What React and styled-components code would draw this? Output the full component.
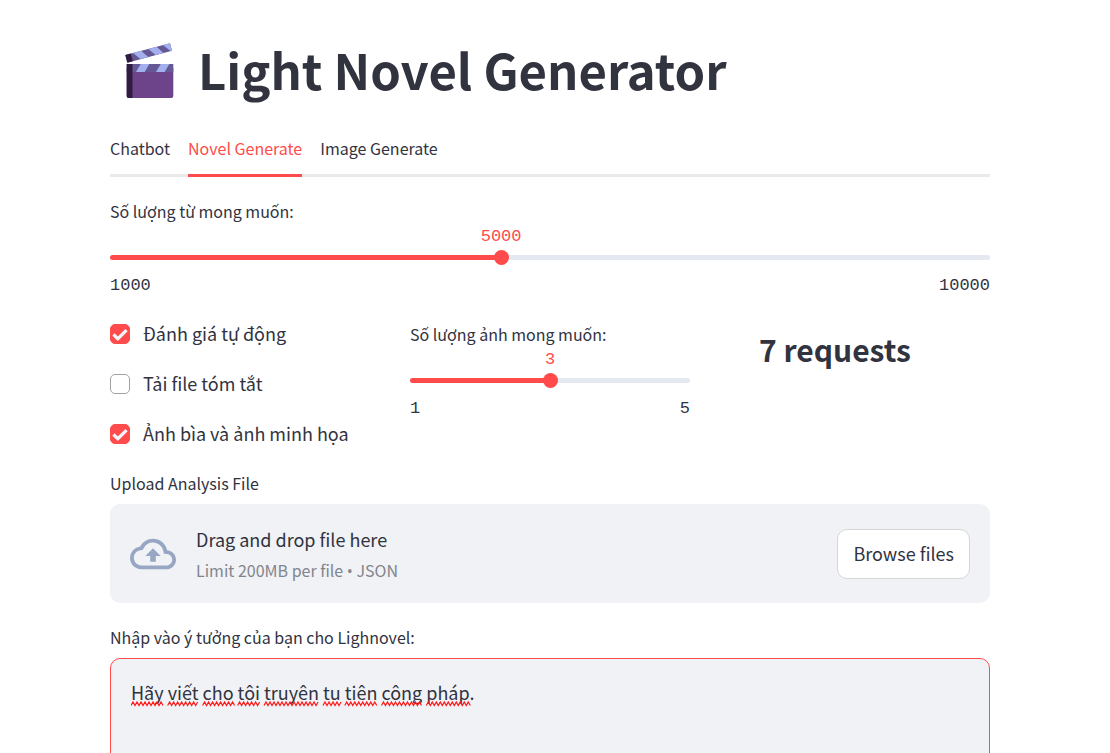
import React, { useLayoutEffect, useRef, useState } from "react";
import styled, { createGlobalStyle } from "styled-components";
import { MdOutlineCloudUpload } from "react-icons/md";

const ink = "#31333f";
const red = "#ff4b4b";
const panel = "#f0f2f6";
const sans = '"Noto Sans CJK SC", "Noto Sans", sans-serif';
const mono = '"Liberation Mono", monospace';

const GlobalStyle = createGlobalStyle`
  *, *::before, *::after { box-sizing: border-box; }
  html { scrollbar-width: none; }
  body {
    margin: 0;
    background: #fff;
    color: ${ink};
    font-family: ${sans};
    font-size: 18px;
    line-height: 30px;
  }
  button, input, textarea { font: inherit; color: inherit; }
`;

const Page = styled.main`
  display: flex;
  flex-direction: column;
  padding: 35px 120px 60px 110px;
`;

const Title = styled.h1`
  display: flex;
  align-items: center;
  gap: 20px;
  margin: 0 0 33px;
  padding-left: 12px;
  font-size: 49px;
  font-weight: 700;
  line-height: 68px;
`;

const Clapper = styled.svg`
  flex: none;
  width: 56px;
  height: 60px;
  margin-top: 2px;
`;

const TabList = styled.div`
  display: flex;
  gap: 18px;
  margin-bottom: 22px;
  border-bottom: 3px solid #eaeaeb;
`;

const Tab = styled.button`
  margin: 0 0 -3px;
  padding: 0 0 13px;
  border: 0;
  border-bottom: 3px solid ${(p) => (p.$active ? red : "transparent")};
  background: none;
  color: ${(p) => (p.$active ? red : ink)};
  font-size: 16px;
  line-height: 25px;
  cursor: pointer;
`;

const FieldLabel = styled.label`
  display: block;
  font-size: 16px;
  line-height: 25px;
`;

const SliderField = styled.div`
  display: flex;
  flex-direction: column;
`;

const ValueRow = styled.div`
  display: grid;
  height: 26px;
`;

const SliderValue = styled.output`
  grid-column: 2;
  justify-self: center;
  color: ${red};
  font-family: ${mono};
  font-size: 17px;
  line-height: 26px;
`;

const TrackRow = styled.div`
  display: grid;
  align-items: center;
  height: 15px;
`;

const TrackBar = styled.div`
  grid-area: 1 / 1;
  height: 5px;
  border-radius: 5px;
`;

const Range = styled.input`
  grid-area: 1 / 1;
  width: calc(100% + 15px);
  height: 15px;
  margin: 0 -7px;
  appearance: none;
  background: transparent;
  cursor: pointer;

  &::-webkit-slider-thumb {
    appearance: none;
    width: 15px;
    height: 15px;
    border-radius: 50%;
    background: ${red};
  }
`;

const Ticks = styled.div`
  display: flex;
  justify-content: space-between;
  margin-top: 8px;
  font-family: ${mono};
  font-size: 17px;
  line-height: 25px;
`;

const Columns = styled.div`
  display: grid;
  grid-template-columns: repeat(3, minmax(0, 1fr));
  gap: 20px;
  margin: 20px 0 23px;
`;

const CheckList = styled.div`
  display: flex;
  flex-direction: column;
  gap: 20px;
`;

const CheckLabel = styled.label`
  display: flex;
  align-items: center;
  gap: 13px;
  cursor: pointer;
`;

const CheckFrame = styled.span`
  display: grid;
  flex: none;
  width: 20px;
  height: 20px;
  margin-top: 2px;

  & > svg {
    grid-area: 1 / 1;
    place-self: center;
    width: 16px;
    height: 13px;
    pointer-events: none;
  }
`;

const CheckInput = styled.input`
  grid-area: 1 / 1;
  width: 20px;
  height: 20px;
  margin: 0;
  appearance: none;
  border: 1px solid #a3a4aa;
  border-radius: 5px;
  background: #fff;

  &:checked {
    border-color: ${red};
    background: ${red};
  }
`;

const SliderCell = styled.div`
  padding-top: 4px;
`;

const Requests = styled.h3`
  margin: 0;
  padding: 10px 30px 0 0;
  font-size: 30px;
  font-weight: 700;
  line-height: 42px;
  text-align: center;
`;

const DropZone = styled.section`
  display: flex;
  align-items: center;
  gap: 20px;
  margin: 8px 0 22px;
  padding: 20px;
  border-radius: 10px;
  background: ${panel};

  & > svg {
    flex: none;
    color: #97a6c3;
  }
`;

const DropText = styled.div`
  display: flex;
  flex: 1;
  flex-direction: column;
  gap: 4px;
`;

const DropHint = styled.small`
  color: #83858c;
  font-size: 16px;
  line-height: 25px;
`;

const Bullet = styled.span`
  font-family: "Open Sans", sans-serif;
  line-height: 1;
`;

const BrowseButton = styled.button`
  padding: 8px 15px 10px;
  border: 1px solid #d6d6d9;
  border-radius: 10px;
  background: #fff;
  cursor: pointer;
`;

const EditorFrame = styled.div`
  position: relative;
  margin-top: 8px;
`;

const Editor = styled.textarea`
  display: block;
  width: 100%;
  height: 250px;
  padding: 18px 20px;
  border: 1px solid ${red};
  border-radius: 10px;
  outline: none;
  background: ${panel};
  resize: vertical;
`;

const SpellMarks = styled.svg`
  position: absolute;
  top: 42px;
  left: 21px;
  width: calc(100% - 42px);
  height: 8px;
  pointer-events: none;
`;

function ClapperIcon() {
  return (
    <Clapper viewBox="0 0 56 60" aria-hidden="true">
      <path d="M4.700 28H51.300V56A2 2 0 0 1 49.300 58H6.700A2 2 0 0 1 4.700 56Z" fill="#6d4489" />
      <path d="M4.700 24H51.300V32H4.700Z" fill="#655995" />
      <path d="M4.700 24H10.500V58H6.700A2 2 0 0 1 4.700 56Z" fill="#321b41" />
      <path d="M18.700 24H27.300L22.700 32H14ZM38.700 24H47.300L42.700 32H34Z" fill="#a4afed" />
      <path d="M3.300 15L48 3.200L50 10.700L5.300 22.700Z" fill="#655995" />
      <path d="M3.300 15L8.800 13.500L10.800 21.200L5.300 22.700Z" fill="#321b41" />
      <path d="M11 13L19 10.800L26.300 17.100L18.500 19.100ZM26.500 8.900L34.500 6.800L41.500 13L33.500 15.100ZM41 5.100L48 3.200L50 10.700L48.500 11.100Z" fill="#a4afed" />
    </Clapper>
  );
}

function Slider({ id, label, min, max, step, initial }) {
  const [value, setValue] = useState(initial);
  const percent = ((value - min) / (max - min)) * 100;
  return (
    <SliderField>
      <FieldLabel htmlFor={id}>{label}</FieldLabel>
      <ValueRow style={{ gridTemplateColumns: `${percent}% 0 1fr` }}>
        <SliderValue htmlFor={id}>{value}</SliderValue>
      </ValueRow>
      <TrackRow>
        <TrackBar
          style={{ background: `linear-gradient(to right, ${red} ${percent}%, #e4e8f0 ${percent}%)` }}
        />
        <Range
          id={id}
          type="range"
          min={min}
          max={max}
          step={step}
          value={value}
          onChange={(e) => setValue(Number(e.target.value))}
        />
      </TrackRow>
      <Ticks>
        <span>{min}</span>
        <span>{max}</span>
      </Ticks>
    </SliderField>
  );
}

function Check({ label, initial = false }) {
  const [checked, setChecked] = useState(initial);
  return (
    <CheckLabel>
      <CheckFrame>
        <CheckInput type="checkbox" checked={checked} onChange={(e) => setChecked(e.target.checked)} />
        {checked && (
          <svg viewBox="0 0 17 13" aria-hidden="true">
            <path d="M1.500 6.500L6.200 11L15.500 1.800" fill="none" stroke="#f4f6fa" strokeWidth="3.400" />
          </svg>
        )}
      </CheckFrame>
      {label}
    </CheckLabel>
  );
}

function squiggle(start, end) {
  let d = `M${start} 5.5`;
  let up = true;
  for (let x = start + 2; x <= end + 1; x += 2) {
    d += `L${x} ${up ? 2 : 5.5}`;
    up = !up;
  }
  return d;
}

function IdeaEditor({ id }) {
  const editor = useRef(null);
  const [text, setText] = useState("Hãy viết cho tôi truyên tu tiên công pháp.");
  const [marks, setMarks] = useState([]);

  useLayoutEffect(() => {
    const style = getComputedStyle(editor.current);
    const ctx = document.createElement("canvas").getContext("2d");
    ctx.font = `${style.fontSize} ${style.fontFamily}`;
    const line = text.split("\n")[0];
    setMarks(
      [...line.matchAll(/[^\s.,]+/g)].map((m) => {
        const start = ctx.measureText(line.slice(0, m.index)).width;
        return squiggle(start, start + ctx.measureText(m[0]).width);
      })
    );
  }, [text]);

  return (
    <EditorFrame>
      <Editor
        id={id}
        ref={editor}
        spellCheck={false}
        value={text}
        onChange={(e) => setText(e.target.value)}
      />
      <SpellMarks aria-hidden="true">
        <path d={marks.join("")} fill="none" stroke="#ff1a1a" strokeWidth="1.200" />
      </SpellMarks>
    </EditorFrame>
  );
}

const tabs = ["Chatbot", "Novel Generate", "Image Generate"];

export default function App() {
  const [active, setActive] = useState(tabs[1]);
  return (
    <>
      <GlobalStyle />
      <Page>
        <Title>
          <ClapperIcon />
          Light Novel Generator
        </Title>
        <TabList role="tablist">
          {tabs.map((name) => (
            <Tab
              key={name}
              type="button"
              role="tab"
              aria-selected={name === active}
              $active={name === active}
              onClick={() => setActive(name)}
            >
              {name}
            </Tab>
          ))}
        </TabList>
        <Slider id="words" label="Số lượng từ mong muốn:" min={1000} max={10000} step={1000} initial={5000} />
        <Columns>
          <CheckList>
            <Check label="Đánh giá tự động" initial />
            <Check label="Tải file tóm tắt" />
            <Check label="Ảnh bìa và ảnh minh họa" initial />
          </CheckList>
          <SliderCell>
            <Slider id="images" label="Số lượng ảnh mong muốn:" min={1} max={5} step={1} initial={3} />
          </SliderCell>
          <Requests>7 requests</Requests>
        </Columns>
        <FieldLabel as="span" id="upload-label">Upload Analysis File</FieldLabel>
        <DropZone aria-labelledby="upload-label">
          <MdOutlineCloudUpload size={46} aria-hidden="true" />
          <DropText>
            <span>Drag and drop file here</span>
            <DropHint>
              Limit 200MB per file <Bullet>•</Bullet> JSON
            </DropHint>
          </DropText>
          <BrowseButton type="button">Browse files</BrowseButton>
        </DropZone>
        <FieldLabel htmlFor="idea">Nhập vào ý tưởng của bạn cho Lighnovel:</FieldLabel>
        <IdeaEditor id="idea" />
      </Page>
    </>
  );
}
